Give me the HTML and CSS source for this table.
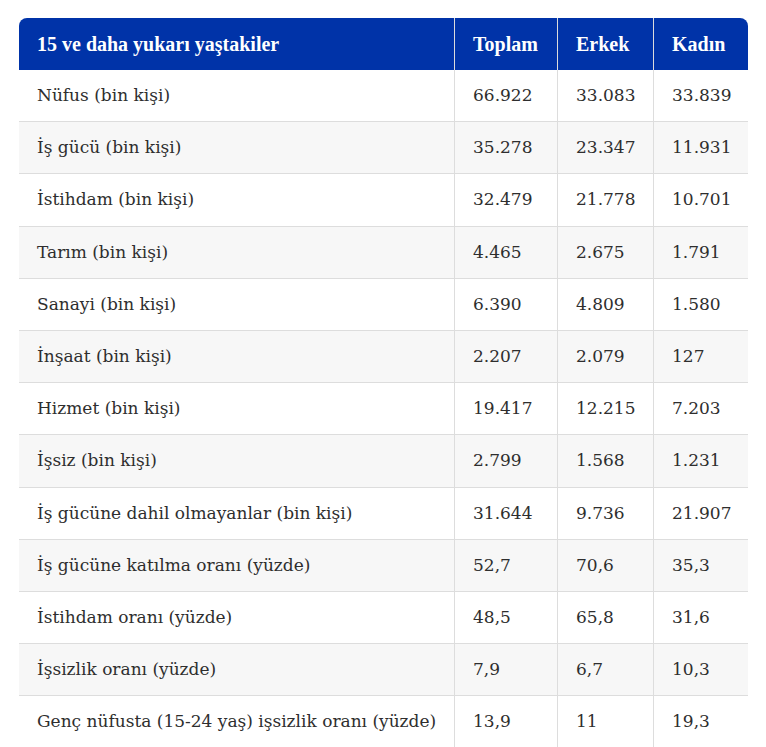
FILE: index.html
```html
<!DOCTYPE html>
<html lang="tr">
<head>
<meta charset="utf-8">
<link rel="stylesheet" href="styles.css">
</head>
<body>
<div class="wrap">
<table class="stats">
<colgroup>
<col class="c1"><col class="c2"><col class="c3"><col class="c4">
</colgroup>
<thead>
<tr><th>15 ve daha yukarı yaştakiler</th><th>Toplam</th><th>Erkek</th><th>Kadın</th></tr>
</thead>
<tbody>
<tr><td>Nüfus (bin kişi)</td><td>66.922</td><td>33.083</td><td>33.839</td></tr>
<tr><td>İş gücü (bin kişi)</td><td>35.278</td><td>23.347</td><td>11.931</td></tr>
<tr><td>İstihdam (bin kişi)</td><td>32.479</td><td>21.778</td><td>10.701</td></tr>
<tr><td>Tarım (bin kişi)</td><td>4.465</td><td>2.675</td><td>1.791</td></tr>
<tr><td>Sanayi (bin kişi)</td><td>6.390</td><td>4.809</td><td>1.580</td></tr>
<tr><td>İnşaat (bin kişi)</td><td>2.207</td><td>2.079</td><td>127</td></tr>
<tr><td>Hizmet (bin kişi)</td><td>19.417</td><td>12.215</td><td>7.203</td></tr>
<tr><td>İşsiz (bin kişi)</td><td>2.799</td><td>1.568</td><td>1.231</td></tr>
<tr><td>İş gücüne dahil olmayanlar (bin kişi)</td><td>31.644</td><td>9.736</td><td>21.907</td></tr>
<tr><td>İş gücüne katılma oranı (yüzde)</td><td>52,7</td><td>70,6</td><td>35,3</td></tr>
<tr><td>İstihdam oranı (yüzde)</td><td>48,5</td><td>65,8</td><td>31,6</td></tr>
<tr><td>İşsizlik oranı (yüzde)</td><td>7,9</td><td>6,7</td><td>10,3</td></tr>
<tr><td>Genç nüfusta (15-24 yaş) işsizlik oranı (yüzde)</td><td>13,9</td><td>11</td><td>19,3</td></tr>
</tbody>
</table>
</div>
</body>
</html>
```

FILE: styles.css
```css
html, body {
  margin: 0;
  padding: 0;
  background: #ffffff;
}
.wrap {
  padding: 18px 0 0 19px;
}
.stats {
  width: 729px;
  table-layout: fixed;
  border-collapse: separate;
  border-spacing: 0;
  color: #2e2e2e;
}
.c1 { width: 436px; }
.c2 { width: 103px; }
.c3 { width: 96px; }
.c4 { width: 94px; }
.stats th {
  font-family: "Liberation Serif", "DejaVu Serif", serif;
  font-size: 20px;
  line-height: 27px;
  background: #0033a8;
  color: #ffffff;
  font-weight: bold;
  text-align: left;
  padding: 12.5px 18px;
  border-right: 1px solid #dcdcdc;
}
.stats th:first-child { border-top-left-radius: 8px; }
.stats th:last-child { border-top-right-radius: 8px; border-right: none; }
.stats td {
  font-family: "DejaVu Serif", "Liberation Serif", serif;
  font-size: 17px;
  line-height: 27px;
  padding: 12.1px 18px;
  border-right: 1px solid #dddddd;
  border-bottom: 1px solid #dddddd;
  white-space: nowrap;
}
.stats td:last-child { border-right: none; }
.stats tbody tr:nth-child(even) td { background: #f7f7f7; }
```
